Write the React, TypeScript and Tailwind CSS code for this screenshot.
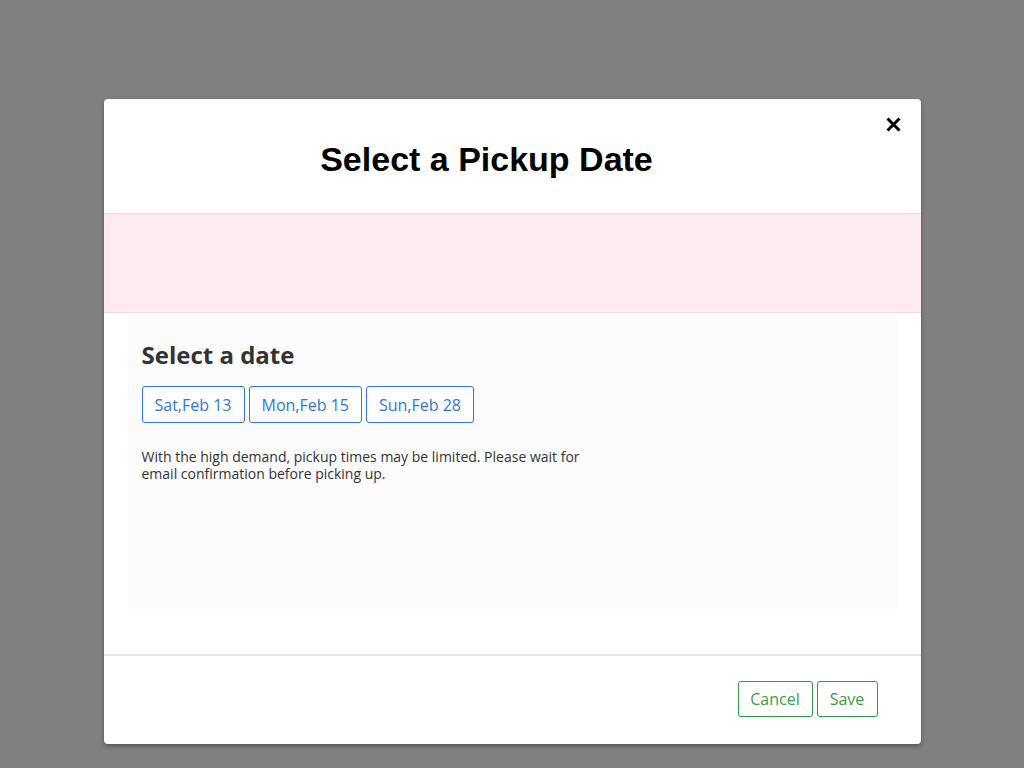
import React from 'react';

const dates = ['Sat,Feb 13', 'Mon,Feb 15', 'Sun,Feb 28'];

const App: React.FC = () => {
  return (
    <div className="min-h-screen w-full bg-[#808080] pt-[99px] font-['Open_Sans',sans-serif]">
      <div className="mx-auto w-[817px] h-[645px] rounded-[4px] bg-white shadow-[0_2px_4px_rgba(0,0,0,0.35)] flex flex-col overflow-hidden">
        {/* header */}
        <div className="h-[114px] flex items-start">
          <h1 className="flex-1 pt-[39px] text-center font-['Liberation_Sans',Arial,sans-serif] text-[34px] leading-[42px] font-bold text-black">
            Select a Pickup Date
          </h1>
          <button className="w-[48px] h-[48px] mt-[1px] mr-[3px] flex items-center justify-center">
            <svg width="15" height="15" viewBox="0 0 15 15">
              <path d="M1.5 1.5 L13.5 13.5 M13.5 1.5 L1.5 13.5" stroke="#000" strokeWidth="3" />
            </svg>
          </button>
        </div>

        {/* alert band */}
        <div className="h-[100px] border-y border-[#e7dfe2] bg-[#fdebf0]" />

        {/* body */}
        <div className="h-[341px] px-[24px]">
          <div className="h-[296px] bg-[#fcfcfc] pl-[14px] pt-[26px]">
            <h2 className="text-[24px] leading-[32px] font-bold text-[#333]">Select a date</h2>
            <div className="mt-[15px] flex gap-[4px]">
              {dates.map((d) => (
                <button
                  key={d}
                  className="h-[37px] px-[12px] rounded-[3px] border border-[#2e7bd6] text-[16px] text-[#2a7ad5] bg-white"
                >
                  {d}
                </button>
              ))}
            </div>
            <p className="mt-[25px] w-[470px] text-[14px] leading-[17px] text-[#333]">
              With the high demand, pickup times may be limited. Please wait for email confirmation before picking up.
            </p>
          </div>
        </div>

        {/* footer */}
        <div className="flex-1 border-t-2 border-[#e6e6e6] flex items-center justify-end pr-[43px] pb-[2px] gap-[4px]">
          <button className="h-[36px] w-[75px] rounded-[3px] border border-[#2f9a45] text-[16px] text-[#3d9a4f] bg-white">
            Cancel
          </button>
          <button className="h-[36px] w-[61px] rounded-[3px] border border-[#2f9a45] text-[16px] text-[#3d9a4f] bg-white">
            Save
          </button>
        </div>
      </div>
    </div>
  );
};

export default App;
